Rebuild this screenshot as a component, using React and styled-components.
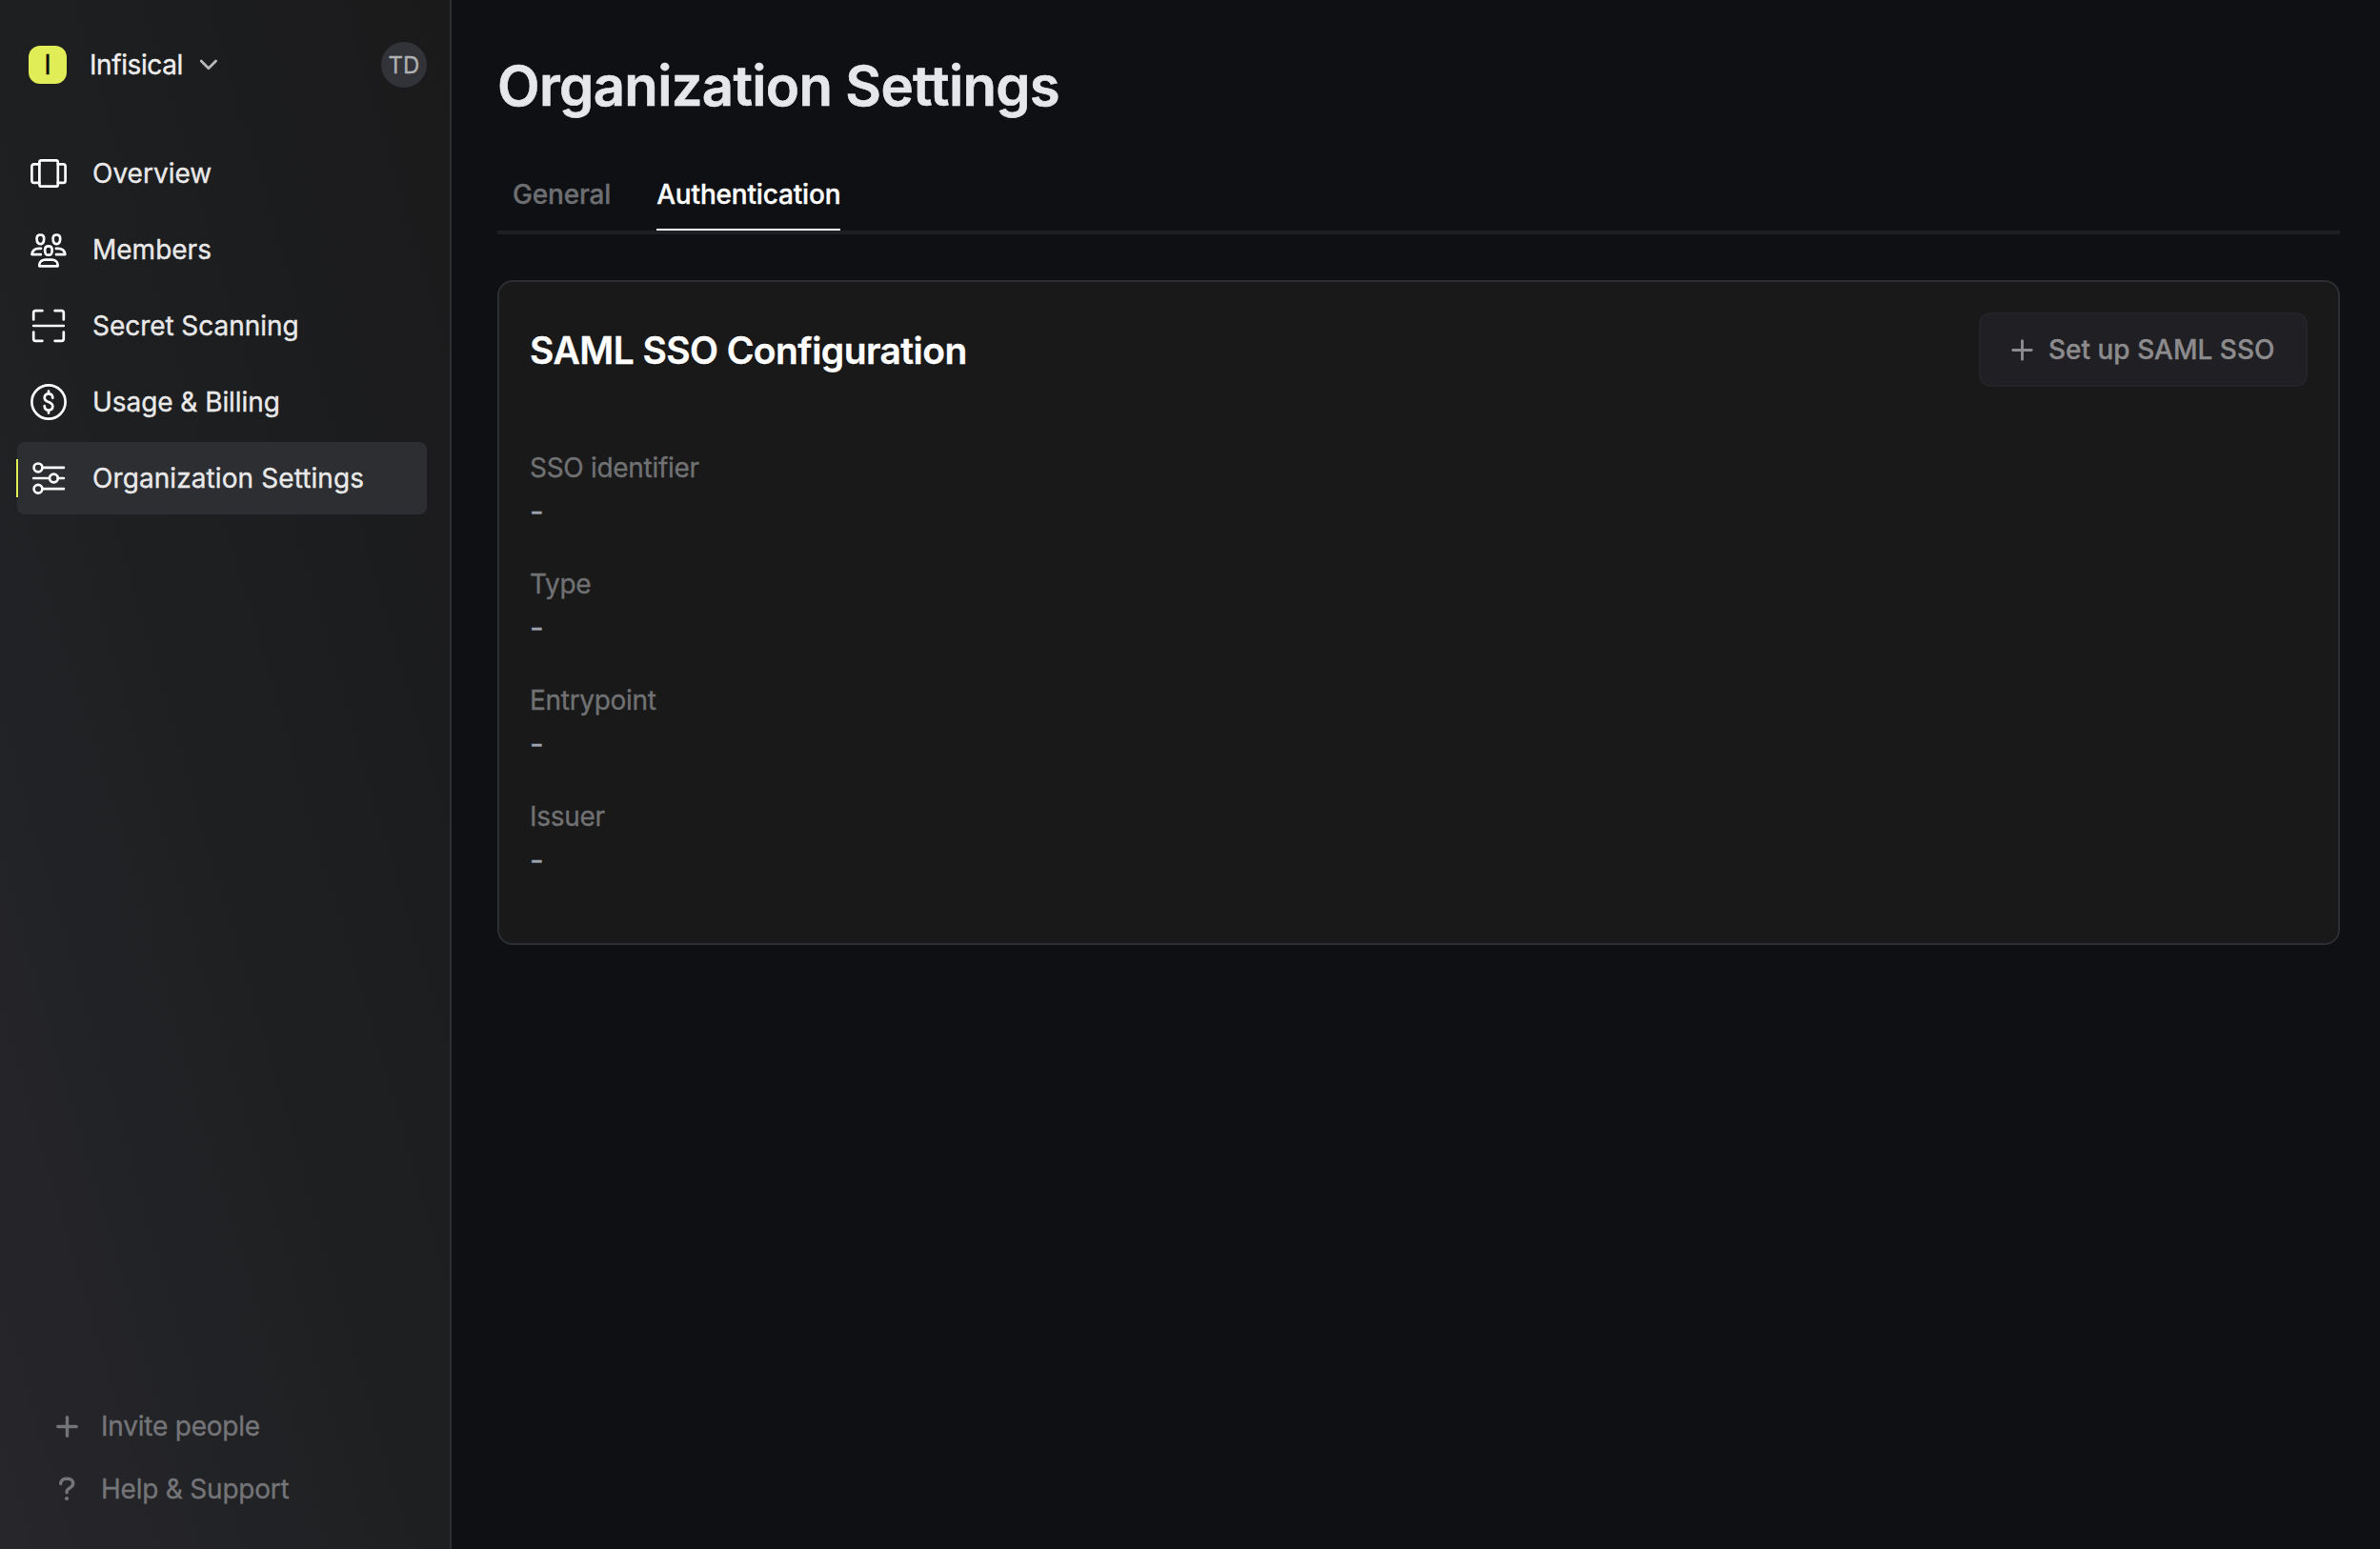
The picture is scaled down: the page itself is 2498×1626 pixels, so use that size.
import React from "react";
import styled, { createGlobalStyle } from "styled-components";

const GlobalStyle = createGlobalStyle`
  *, *::before, *::after { box-sizing: border-box; }
  html, body, #root { height: 100%; }
  body {
    margin: 0;
    background: #0e1014;
    color: #e9e9ea;
    font-family: Inter, "Liberation Sans", sans-serif;
    font-size: 28px;
    -webkit-text-stroke: 0.35px currentColor;
    overflow: hidden;
  }
`;

const Layout = styled.div`
  display: flex;
  height: 100vh;
`;

const Sidebar = styled.aside`
  display: flex;
  flex-direction: column;
  flex: none;
  width: 474px;
  padding: 44px 24px 30px 18px;
  border-right: 2px solid #2e2f33;
  background: linear-gradient(to top right, #27272b, #1e1f21 50%, #1a1a1b);
`;

const OrgBar = styled.header`
  display: flex;
  align-items: center;
  height: 48px;
  padding-left: 12px;
`;

const OrgBadge = styled.div`
  display: grid;
  place-items: center;
  width: 40px;
  height: 40px;
  margin-right: 24px;
  border-radius: 12px;
  background: #e0ed57;
  color: #0c0d0b;
`;

const OrgName = styled.span`
  letter-spacing: -0.4px;
  color: #eeeeef;
  margin-right: 17px;
`;

const Avatar = styled.div`
  display: grid;
  place-items: center;
  width: 48px;
  height: 48px;
  margin-left: auto;
  border-radius: 50%;
  background: #323338;
  color: #b0b0b1;
  font-size: 24px;
`;

const Nav = styled.nav`
  display: flex;
  flex-direction: column;
  gap: 4px;
  margin-top: 52px;
`;

const NavItem = styled.a`
  position: relative;
  display: flex;
  align-items: center;
  gap: 27px;
  height: 76px;
  padding-left: 14px;
  border-radius: 8px;
  background: ${(p) => (p.$active ? "#2d2e32" : "transparent")};
  letter-spacing: ${(p) => p.$tracking || "0"};

  &::before {
    content: "";
    display: ${(p) => (p.$active ? "block" : "none")};
    position: absolute;
    left: -1px;
    top: 18px;
    width: 2px;
    height: 40px;
    background: #e0ed57;
  }
`;

const SidebarFooter = styled.div`
  display: flex;
  flex-direction: column;
  margin-top: auto;
`;

const FooterLink = styled.a`
  display: flex;
  align-items: center;
  gap: 24px;
  height: 66px;
  padding-left: 41px;
  color: #747578;
  letter-spacing: -0.22px;
`;

const Main = styled.main`
  display: flex;
  flex-direction: column;
  flex: 1;
  padding: 54px 42px 0 48px;
`;

const PageTitle = styled.h1`
  margin: 0;
  height: 72px;
  line-height: 72px;
  font-size: 58px;
  font-weight: 600;
  letter-spacing: -0.65px;
  -webkit-text-stroke-width: 0.6px;
  color: #e5e7eb;
`;

const Tabs = styled.div`
  display: flex;
  gap: 48px;
  height: 82px;
  margin-top: 38px;
  padding-left: 16px;
  border-bottom: 4px solid #1d1f22;
`;

const Tab = styled.button`
  height: 78px;
  padding: 3px 0 0;
  border: 0;
  border-bottom: 2px solid ${(p) => (p.$active ? "#fff" : "transparent")};
  background: none;
  font: 500 28px Inter, sans-serif;
  letter-spacing: -0.17px;
  -webkit-text-stroke: 0.35px currentColor;
  color: ${(p) => (p.$active ? "#fff" : "#6d6e71")};
`;

const Card = styled.section`
  height: 698px;
  margin-top: 48px;
  padding: 32px;
  border: 2px solid #2d2e32;
  border-radius: 16px;
  background: #19191a;
`;

const CardHeader = styled.div`
  display: flex;
  align-items: center;
  justify-content: space-between;
  margin-bottom: 63px;
`;

const CardTitle = styled.h2`
  margin: 0;
  font-size: 39px;
  font-weight: 600;
  letter-spacing: -0.56px;
  color: #fff;
`;

const SetupButton = styled.button`
  display: flex;
  align-items: center;
  gap: 16px;
  width: 345px;
  height: 78px;
  padding: 0 0 0 32px;
  border: 2px solid #242428;
  border-radius: 12px;
  background: #201f23;
  color: #8c8b8d;
  font: 500 28px Inter, sans-serif;
  -webkit-text-stroke: 0.35px currentColor;
  white-space: nowrap;
`;

const Fields = styled.dl`
  display: flex;
  flex-direction: column;
  gap: 31px;
  margin: 0;
`;

const Field = styled.div`
  display: flex;
  flex-direction: column;
`;

const FieldLabel = styled.dt`
  line-height: 44px;
  letter-spacing: -0.3px;
  color: #707173;
`;

const FieldValue = styled.dd`
  margin: 0;
  line-height: 47px;
  font-size: 32px;
  color: #9ca3af;
`;

const IconSvg = styled.svg`
  display: block;
  flex: none;
  fill: none;
  stroke: currentColor;
  stroke-linecap: round;
  stroke-linejoin: round;
`;

const NavIcon = ({ children }) => (
  <IconSvg width="38" height="38" viewBox="0 0 38 38" strokeWidth="2.7" color="#fcfcfc">
    {children}
  </IconSvg>
);

const OverviewIcon = () => (
  <NavIcon>
    <rect x="9.4" y="5.3" width="19.4" height="27.4" rx="2" />
    <path d="M9.4 9.3H3.6a2.2 2.2 0 0 0-2.2 2.2v15.2a2.2 2.2 0 0 0 2.2 2.2h5.8M28.8 9.3h5.6a2.2 2.2 0 0 1 2.2 2.2v15.2a2.2 2.2 0 0 1-2.2 2.2h-5.6" />
  </NavIcon>
);

const MembersIcon = () => (
  <NavIcon>
    <path d="M10.4 3.5c2.4 0 3.8 1.5 3.8 3.8 0 2.8-.8 5.8-3.6 5.8s-4-2.8-4-5.6c0-2.4 1.4-4 3.8-4zM27.4 3.5c-2.4 0-3.8 1.5-3.8 3.8 0 2.8.8 5.8 3.6 5.8s4-2.8 4-5.6c0-2.4-1.4-4-3.8-4z" />
    <path d="M18.9 15.4c2.6 0 3.8 1.8 3.8 4 0 2.2-.4 3.4-1 4.3-.6.8-1.6 1-2.8 1s-2.2-.2-2.8-1c-.6-.9-1-2.1-1-4.3 0-2.2 1.2-4 3.8-4z" />
    <path d="M11 17.8H9c-4.700 0-7.200 2.500-7.500 6.400H10.800M26.800 17.800h2c4.700 0 7.200 2.500 7.500 6.400H27" />
    <path d="M9.300 36.300v-1.300c0-3.400 3-5.400 6.500-5.400h6.300c3.500 0 6.500 2 6.500 5.400v1.300z" />
  </NavIcon>
);

const ScanIcon = () => (
  <NavIcon>
    <path d="M3.2 12.4V5.2a2 2 0 0 1 2-2h7.200M25.600 3.200h7.200a2 2 0 0 1 2 2v7.200M34.800 25.600v7.200a2 2 0 0 1-2 2h-7.200M12.400 34.800H5.200a2 2 0 0 1-2-2v-7.200M3.200 19h31.600" />
  </NavIcon>
);

const BillingIcon = () => (
  <NavIcon>
    <circle cx="19" cy="19" r="17.6" />
    <path d="M23.300 14.800c0-2.700-1.700-4.500-4.300-4.500s-4.300 1.600-4.300 4.100c0 2.700 1.900 3.700 4.300 4.600s4.300 1.900 4.300 4.600c0 2.500-1.700 4.100-4.300 4.100s-4.300-1.800-4.300-4.500M19 10.300V7.500M19 27.700v2.900" />
  </NavIcon>
);

const SlidersIcon = () => (
  <NavIcon>
    <circle cx="8" cy="7.9" r="4.4" />
    <circle cx="24.4" cy="19" r="4.4" />
    <circle cx="8" cy="30.2" r="4.4" />
    <path d="M12.500 7.900h22.400M3.200 19h16.700M28.900 19h6M12.500 30.200h22.400" />
  </NavIcon>
);

const ChevronIcon = () => (
  <IconSvg width="20" height="12" viewBox="0 0 20 12" strokeWidth="2.8" color="#b8b8b9">
    <path d="M2.200 2l7.700 7.700L17.600 2" />
  </IconSvg>
);

const PlusIcon = ({ weight = 3.4 }) => (
  <IconSvg width="23" height="23" viewBox="0 0 23 23" strokeWidth={weight}>
    <path d="M11.500 1.800v19.400M1.800 11.500h19.400" />
  </IconSvg>
);

const QuestionIcon = () => (
  <IconSvg width="23" height="26" viewBox="0 0 23 26" strokeWidth="3.4">
    <path d="M4.700 7.600c0-3.400 2.400-5.300 5.500-5.300h2c3.400 0 5.500 2 5.500 4.800 0 2.100-1 3.300-2.600 4.300l-2.100 1.300c-1.300.8-1.900 1.600-1.900 3v1" />
    <circle cx="11" cy="23" r="2.1" fill="currentColor" stroke="none" />
  </IconSvg>
);

const navItems = [
  { label: "Overview", Icon: OverviewIcon },
  { label: "Members", Icon: MembersIcon },
  { label: "Secret Scanning", Icon: ScanIcon, tracking: "-0.05px" },
  { label: "Usage & Billing", Icon: BillingIcon, tracking: "-0.06px" },
  { label: "Organization Settings", Icon: SlidersIcon, active: true, tracking: "0.09px" },
];

const fields = ["SSO identifier", "Type", "Entrypoint", "Issuer"];

export default function App() {
  return (
    <>
      <GlobalStyle />
      <Layout>
        <Sidebar>
          <OrgBar>
            <OrgBadge>I</OrgBadge>
            <OrgName>Infisical</OrgName>
            <ChevronIcon />
            <Avatar>TD</Avatar>
          </OrgBar>
          <Nav>
            {navItems.map(({ label, Icon, active, tracking }) => (
              <NavItem key={label} $active={active} $tracking={tracking}>
                <Icon />
                {label}
              </NavItem>
            ))}
          </Nav>
          <SidebarFooter>
            <FooterLink>
              <PlusIcon />
              Invite people
            </FooterLink>
            <FooterLink>
              <QuestionIcon />
              Help &amp; Support
            </FooterLink>
          </SidebarFooter>
        </Sidebar>
        <Main>
          <PageTitle>Organization Settings</PageTitle>
          <Tabs>
            <Tab>General</Tab>
            <Tab $active>Authentication</Tab>
          </Tabs>
          <Card>
            <CardHeader>
              <CardTitle>SAML SSO Configuration</CardTitle>
              <SetupButton>
                <PlusIcon weight={2.9} />
                Set up SAML SSO
              </SetupButton>
            </CardHeader>
            <Fields>
              {fields.map((label) => (
                <Field key={label}>
                  <FieldLabel>{label}</FieldLabel>
                  <FieldValue>-</FieldValue>
                </Field>
              ))}
            </Fields>
          </Card>
        </Main>
      </Layout>
    </>
  );
}
